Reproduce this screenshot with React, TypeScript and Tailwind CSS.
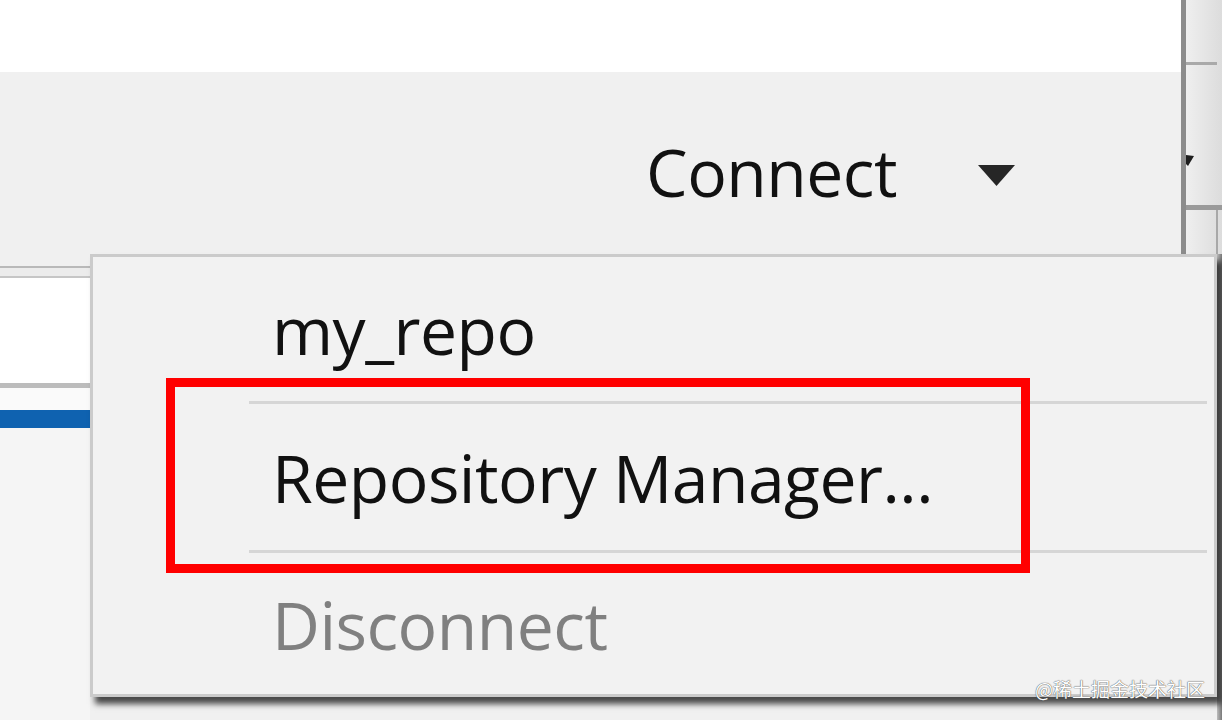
import React from 'react';

const App = () => {
  return (
    <div className="relative w-[1222px] h-[720px] flex flex-col overflow-hidden bg-[#f0f0f0] font-['Open_Sans',sans-serif]">
      {/* Toolbar area */}
      <div className="h-[254px] flex">
        <div className="flex-1 flex flex-col">
          <div className="h-[72px] bg-white" />
          <div className="flex-1 flex justify-end items-start pt-[54px] pr-[166px] bg-[#f0f0f0]">
            <span className="text-[66px] leading-[90px] tracking-[-0.5px] text-[#111]">Connect</span>
            <svg className="ml-[81px] mt-[39px]" width="37" height="21" viewBox="0 0 37 21">
              <polygon points="0,0 37,0 18.5,21" fill="#262626" />
            </svg>
          </div>
        </div>
        <div className="w-[5px] bg-[#8c8c8c]" />
        <div className="w-[36px] flex flex-col bg-gradient-to-r from-[#efefef] to-[#dcdcdc]">
          <div className="h-[62px]" />
          <div className="h-[3px] mr-[5px] bg-[#a9a9a9]" />
          <div className="h-[140px] pt-[90px]">
            <svg width="8" height="11" viewBox="0 0 8 11">
              <polygon points="0,0 8,1 2,11 0,9" fill="#1e1e1e" />
            </svg>
          </div>
          <div className="h-[5px] bg-[#9a9a9a]" />
          <div className="flex-1 flex justify-end pr-[4px]">
            <div className="w-[2px] bg-[#a8a8a8]" />
          </div>
        </div>
      </div>

      {/* Lower area with the open dropdown */}
      <div className="flex-1 flex">
        <div className="w-[90px] flex flex-col">
          <div className="h-[12px] bg-[#f0f0f0]" />
          <div className="h-[2px] bg-[#b9b9b9]" />
          <div className="h-[8px] bg-[#ececec]" />
          <div className="h-[2px] bg-[#c6c6c6]" />
          <div className="h-[105px] bg-white" />
          <div className="h-[5px] bg-[#bcbcbc]" />
          <div className="h-[22px] bg-[#fafafa]" />
          <div className="h-[18px] bg-[#0f62b0]" />
          <div className="flex-1 bg-[#f5f5f5]" />
        </div>

        <div className="relative z-10 w-[1127px] h-[443px] flex flex-col bg-[#f2f2f2] border-[3px] border-[#cbcbcb] shadow-[5px_7px_6px_rgba(0,0,0,0.7)]">
          <div className="h-[144px] flex items-center pl-[179px]">
            <span className="text-[66px] leading-[90px] tracking-[-0.5px] text-[#111]">my_repo</span>
          </div>
          <div className="h-[3px] ml-[156px] mr-[7px] bg-[#d6d6d6]" />
          <div className="h-[146px] flex items-center pl-[179px]">
            <span className="text-[66px] leading-[90px] tracking-[-0.5px] text-[#111]">Repository Manager...</span>
          </div>
          <div className="h-[3px] ml-[156px] mr-[7px] bg-[#d6d6d6]" />
          <div className="h-[141px] flex items-center pl-[179px]">
            <span className="text-[66px] leading-[90px] tracking-[-0.5px] text-[#808080]">Disconnect</span>
          </div>

          {/* annotation box */}
          <div className="absolute left-[73px] top-[121px] w-[864px] h-[195px] border-[9px] border-[#ff0000]" />
        </div>

        <div className="flex-1 bg-gradient-to-r from-[#bdbdbd] to-[#7a7a7a]" />
      </div>

      <div className="absolute right-[17px] top-[677px] z-20 text-[19px] leading-[24px] text-white font-['Noto_Sans_CJK_SC',sans-serif] [text-shadow:0_0_1px_#555,0_0_1px_#555]">
        @稀土掘金技术社区
      </div>
    </div>
  );
};

export default App;
